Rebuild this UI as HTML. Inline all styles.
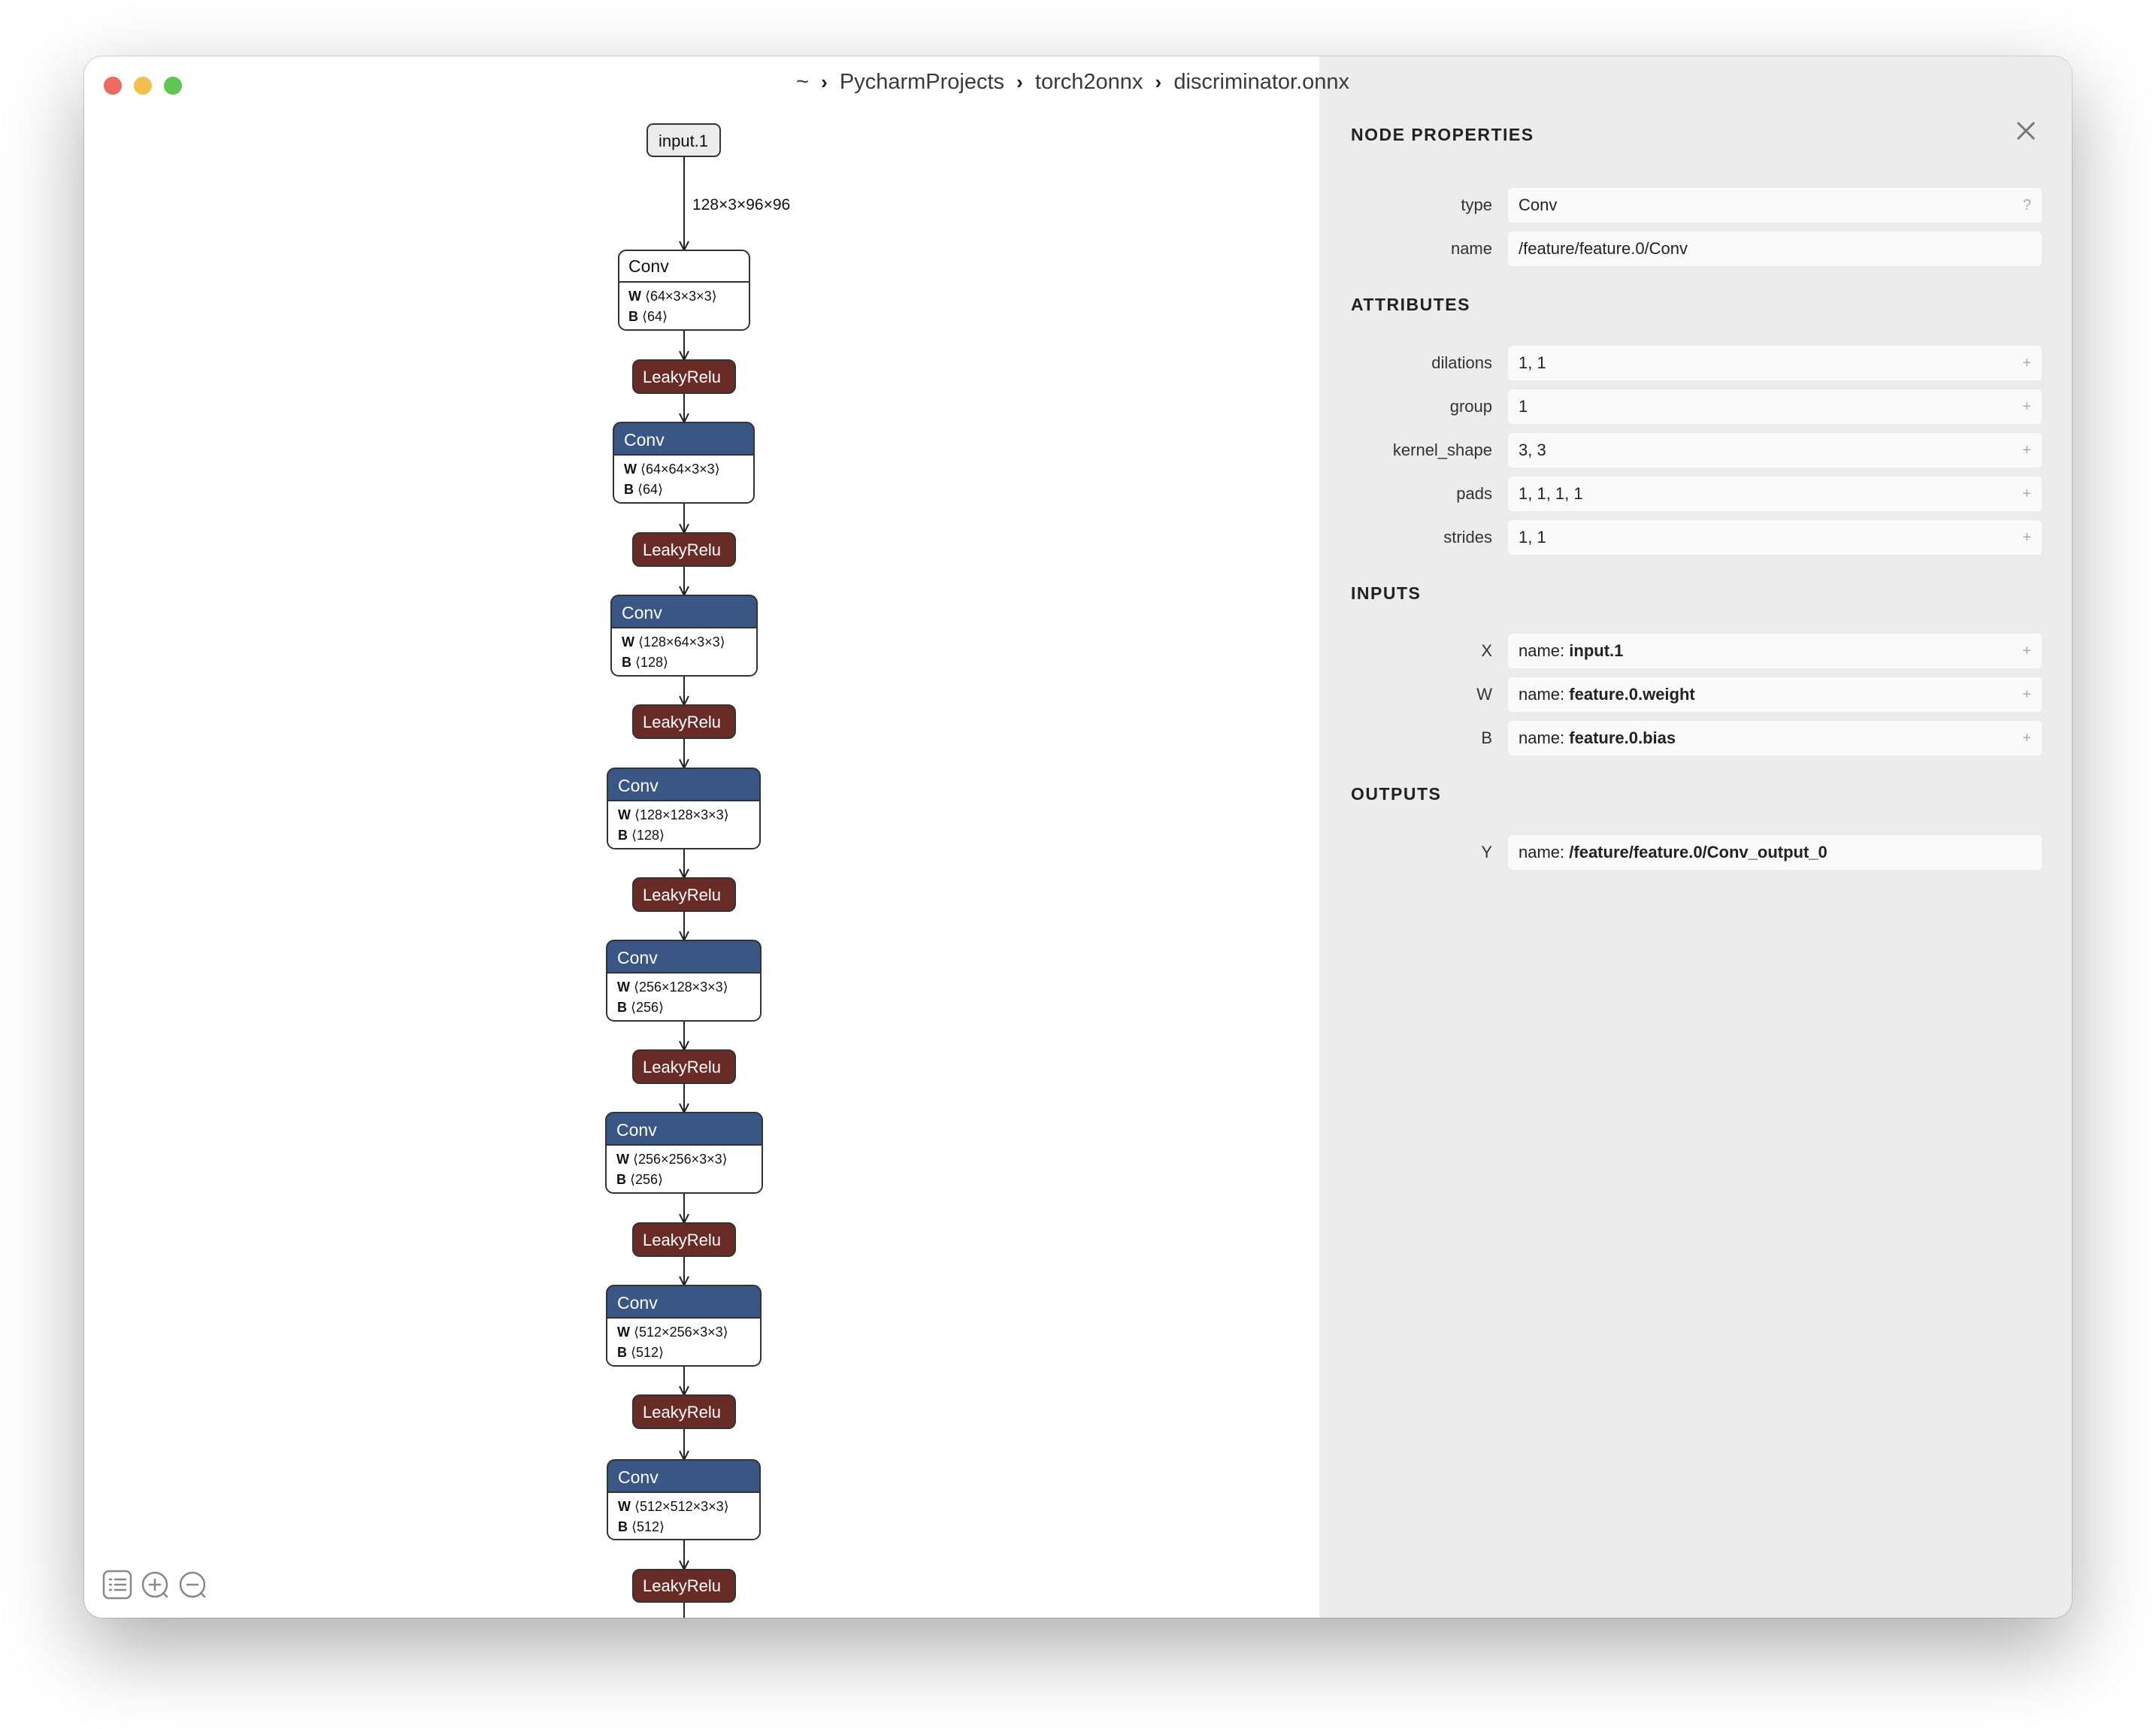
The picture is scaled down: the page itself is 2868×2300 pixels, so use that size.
<!DOCTYPE html>
<html><head><meta charset="utf-8"><style>
html,body{margin:0;padding:0;width:2868px;height:2300px;background:#fff;overflow:hidden;font-family:"Liberation Sans",sans-serif;}
.win{position:absolute;left:112px;top:75px;width:2644px;height:2077px;background:#fff;border-radius:24px;box-shadow:0 0 0 1px rgba(0,0,0,.14),0 40px 110px rgba(0,0,0,.33);}
.dot{position:absolute;width:24px;height:24px;border-radius:50%;top:102px;}
.crumb{position:absolute;left:1059px;top:93px;font-size:29px;color:#3a3a3a;white-space:nowrap;z-index:5;}
.crumb b{font-size:26px;color:#222;}
.panel{position:absolute;left:1755px;top:75px;width:1001px;height:2077px;background:#ececec;border-radius:0 24px 24px 0;}
.h{position:absolute;left:1797px;font-size:23px;font-weight:bold;letter-spacing:1.5px;color:#222;line-height:30px;}
.lab{position:absolute;right:883px;font-size:22px;color:#333;line-height:46px;text-align:right;}
.box{position:absolute;left:2006px;width:710px;height:46px;background:#fafafa;border-radius:5px;font-size:22px;color:#222;line-height:46px;box-sizing:border-box;padding-left:14px;}
.box i{position:absolute;right:14px;top:0;font-style:normal;color:#aaa;font-size:20px;}
.box b{font-weight:bold;}
</style></head><body>
<div class="win"></div>
<div class="dot" style="left:138px;background:#ec6a5e;"></div>
<div class="dot" style="left:178px;background:#f4bf4f;"></div>
<div class="dot" style="left:218px;background:#61c554;"></div>

<svg width="2868" height="2300" style="position:absolute;left:0;top:0" font-family="Liberation Sans, sans-serif">
<g stroke="#222" stroke-width="2" fill="none">
<path d="M910 208V333M904 321L910 333L916 321"/>
<path d="M910 439V479M904 467L910 479L916 467"/>
<path d="M910 523V562M904 550L910 562L916 550"/>
<path d="M910 669V709M904 697L910 709L916 697"/>
<path d="M910 753V792M904 780L910 792L916 780"/>
<path d="M910 899V938M904 926L910 938L916 926"/>
<path d="M910 982V1022M904 1010L910 1022L916 1010"/>
<path d="M910 1129V1168M904 1156L910 1168L916 1156"/>
<path d="M910 1212V1251M904 1239L910 1251L916 1239"/>
<path d="M910 1358V1397M904 1385L910 1397L916 1385"/>
<path d="M910 1441V1480M904 1468L910 1480L916 1468"/>
<path d="M910 1587V1627M904 1615L910 1627L916 1615"/>
<path d="M910 1671V1710M904 1698L910 1710L916 1698"/>
<path d="M910 1817V1856M904 1844L910 1856L916 1844"/>
<path d="M910 1900V1942M904 1930L910 1942L916 1930"/>
<path d="M910 2048V2088M904 2076L910 2088L916 2076"/>
<path d="M910 2131V2152"/>
</g>
<text x="921" y="279" font-size="21" fill="#111">128×3×96×96</text>
<rect x="861" y="165" width="97" height="43" rx="8" fill="#ececec" stroke="#333" stroke-width="2"/>
<text x="909" y="195" font-size="22" text-anchor="middle" fill="#111">input.1</text>

<rect x="823" y="333" width="174" height="106" rx="10" fill="#fff" stroke="#333" stroke-width="2"/>
<line x1="823" y1="375" x2="997" y2="375" stroke="#333" stroke-width="2"/>
<text x="836" y="362" font-size="23" fill="#111">Conv</text>
<text x="836" y="400" font-size="18" fill="#111"><tspan font-weight="bold">W</tspan>  ⟨64×3×3×3⟩</text>
<text x="836" y="427" font-size="18" fill="#111"><tspan font-weight="bold">B</tspan> ⟨64⟩</text>

<g>
<path d="M816 572a10 10 0 0 1 10-10h167a10 10 0 0 1 10 10v33h-187z" fill="#3a5684"/>
<rect x="816" y="562" width="187" height="107" rx="10" fill="none" stroke="#333" stroke-width="2"/>
<line x1="816" y1="605" x2="1003" y2="605" stroke="#333" stroke-width="2"/>
<text x="830" y="593" font-size="23" fill="#fff">Conv</text>
<text x="830" y="630" font-size="18" fill="#111"><tspan font-weight="bold">W</tspan>  ⟨64×64×3×3⟩</text>
<text x="830" y="657" font-size="18" fill="#111"><tspan font-weight="bold">B</tspan> ⟨64⟩</text>
</g>
<g transform="translate(0,230)">
<path d="M813 572a10 10 0 0 1 10-10h174a10 10 0 0 1 10 10v33h-194z" fill="#3a5684"/>
<rect x="813" y="562" width="194" height="107" rx="10" fill="none" stroke="#333" stroke-width="2"/>
<line x1="813" y1="605" x2="1007" y2="605" stroke="#333" stroke-width="2"/>
<text x="827" y="593" font-size="23" fill="#fff">Conv</text>
<text x="827" y="630" font-size="18" fill="#111"><tspan font-weight="bold">W</tspan>  ⟨128×64×3×3⟩</text>
<text x="827" y="657" font-size="18" fill="#111"><tspan font-weight="bold">B</tspan> ⟨128⟩</text>
</g>
<g transform="translate(0,460)">
<path d="M808 572a10 10 0 0 1 10-10h183a10 10 0 0 1 10 10v33h-203z" fill="#3a5684"/>
<rect x="808" y="562" width="203" height="107" rx="10" fill="none" stroke="#333" stroke-width="2"/>
<line x1="808" y1="605" x2="1011" y2="605" stroke="#333" stroke-width="2"/>
<text x="822" y="593" font-size="23" fill="#fff">Conv</text>
<text x="822" y="630" font-size="18" fill="#111"><tspan font-weight="bold">W</tspan>  ⟨128×128×3×3⟩</text>
<text x="822" y="657" font-size="18" fill="#111"><tspan font-weight="bold">B</tspan> ⟨128⟩</text>
</g>
<g transform="translate(0,689)">
<path d="M807 572a10 10 0 0 1 10-10h185a10 10 0 0 1 10 10v33h-205z" fill="#3a5684"/>
<rect x="807" y="562" width="205" height="107" rx="10" fill="none" stroke="#333" stroke-width="2"/>
<line x1="807" y1="605" x2="1012" y2="605" stroke="#333" stroke-width="2"/>
<text x="821" y="593" font-size="23" fill="#fff">Conv</text>
<text x="821" y="630" font-size="18" fill="#111"><tspan font-weight="bold">W</tspan>  ⟨256×128×3×3⟩</text>
<text x="821" y="657" font-size="18" fill="#111"><tspan font-weight="bold">B</tspan> ⟨256⟩</text>
</g>
<g transform="translate(0,918)">
<path d="M806 572a10 10 0 0 1 10-10h188a10 10 0 0 1 10 10v33h-208z" fill="#3a5684"/>
<rect x="806" y="562" width="208" height="107" rx="10" fill="none" stroke="#333" stroke-width="2"/>
<line x1="806" y1="605" x2="1014" y2="605" stroke="#333" stroke-width="2"/>
<text x="820" y="593" font-size="23" fill="#fff">Conv</text>
<text x="820" y="630" font-size="18" fill="#111"><tspan font-weight="bold">W</tspan>  ⟨256×256×3×3⟩</text>
<text x="820" y="657" font-size="18" fill="#111"><tspan font-weight="bold">B</tspan> ⟨256⟩</text>
</g>
<g transform="translate(0,1148)">
<path d="M807 572a10 10 0 0 1 10-10h185a10 10 0 0 1 10 10v33h-205z" fill="#3a5684"/>
<rect x="807" y="562" width="205" height="107" rx="10" fill="none" stroke="#333" stroke-width="2"/>
<line x1="807" y1="605" x2="1012" y2="605" stroke="#333" stroke-width="2"/>
<text x="821" y="593" font-size="23" fill="#fff">Conv</text>
<text x="821" y="630" font-size="18" fill="#111"><tspan font-weight="bold">W</tspan>  ⟨512×256×3×3⟩</text>
<text x="821" y="657" font-size="18" fill="#111"><tspan font-weight="bold">B</tspan> ⟨512⟩</text>
</g>
<g transform="translate(0,1380)">
<path d="M808 572a10 10 0 0 1 10-10h183a10 10 0 0 1 10 10v33h-203z" fill="#3a5684"/>
<rect x="808" y="562" width="203" height="106" rx="10" fill="none" stroke="#333" stroke-width="2"/>
<line x1="808" y1="605" x2="1011" y2="605" stroke="#333" stroke-width="2"/>
<text x="822" y="593" font-size="23" fill="#fff">Conv</text>
<text x="822" y="630" font-size="18" fill="#111"><tspan font-weight="bold">W</tspan>  ⟨512×512×3×3⟩</text>
<text x="822" y="657" font-size="18" fill="#111"><tspan font-weight="bold">B</tspan> ⟨512⟩</text>
</g>

<g fill="#682b25" stroke="#333" stroke-width="2">
<rect x="842" y="479" width="136" height="44" rx="9"/>
<rect x="842" y="709" width="136" height="44" rx="9"/>
<rect x="842" y="938" width="136" height="44" rx="9"/>
<rect x="842" y="1168" width="136" height="44" rx="9"/>
<rect x="842" y="1397" width="136" height="44" rx="9"/>
<rect x="842" y="1627" width="136" height="44" rx="9"/>
<rect x="842" y="1856" width="136" height="44" rx="9"/>
<rect x="842" y="2088" width="136" height="43" rx="9"/>
</g>
<g fill="#fff" font-size="22" text-anchor="middle">
<text x="907" y="509">LeakyRelu</text>
<text x="907" y="739">LeakyRelu</text>
<text x="907" y="968">LeakyRelu</text>
<text x="907" y="1198">LeakyRelu</text>
<text x="907" y="1427">LeakyRelu</text>
<text x="907" y="1657">LeakyRelu</text>
<text x="907" y="1886">LeakyRelu</text>
<text x="907" y="2117">LeakyRelu</text>
</g>

<g stroke="#888" stroke-width="2.5" fill="none" stroke-linecap="round">
<rect x="138" y="2090" width="36" height="36" rx="7"/>
<path d="M146 2101h2M146 2108h2M146 2115h2M153 2101h14M153 2108h14M153 2115h14"/>
<circle cx="206" cy="2108" r="16"/>
<path d="M199 2108h14M206 2101v14M217 2119l5 5"/>
<circle cx="256" cy="2108" r="16"/>
<path d="M249 2108h14M267 2119l5 5"/>
</g>
</svg>

<div class="panel"></div>
<div class="crumb">~ &nbsp;<b>›</b>&nbsp; PycharmProjects &nbsp;<b>›</b>&nbsp; torch2onnx &nbsp;<b>›</b>&nbsp; discriminator.onnx</div>
<svg width="30" height="30" style="position:absolute;left:2680px;top:159px"><path d="M4 4L26 26M26 4L4 26" stroke="#777" stroke-width="3"/></svg>

<div class="h" style="top:164px">NODE PROPERTIES</div>
<div class="lab" style="top:250px">type</div><div class="box" style="top:250px">Conv<i>?</i></div>
<div class="lab" style="top:308px">name</div><div class="box" style="top:308px">/feature/feature.0/Conv</div>

<div class="h" style="top:390px">ATTRIBUTES</div>
<div class="lab" style="top:460px">dilations</div><div class="box" style="top:460px">1, 1<i>+</i></div>
<div class="lab" style="top:518px">group</div><div class="box" style="top:518px">1<i>+</i></div>
<div class="lab" style="top:576px">kernel_shape</div><div class="box" style="top:576px">3, 3<i>+</i></div>
<div class="lab" style="top:634px">pads</div><div class="box" style="top:634px">1, 1, 1, 1<i>+</i></div>
<div class="lab" style="top:692px">strides</div><div class="box" style="top:692px">1, 1<i>+</i></div>

<div class="h" style="top:774px">INPUTS</div>
<div class="lab" style="top:843px">X</div><div class="box" style="top:843px">name: <b>input.1</b><i>+</i></div>
<div class="lab" style="top:901px">W</div><div class="box" style="top:901px">name: <b>feature.0.weight</b><i>+</i></div>
<div class="lab" style="top:959px">B</div><div class="box" style="top:959px">name: <b>feature.0.bias</b><i>+</i></div>

<div class="h" style="top:1041px">OUTPUTS</div>
<div class="lab" style="top:1111px">Y</div><div class="box" style="top:1111px">name: <b>/feature/feature.0/Conv_output_0</b></div>
</body></html>
